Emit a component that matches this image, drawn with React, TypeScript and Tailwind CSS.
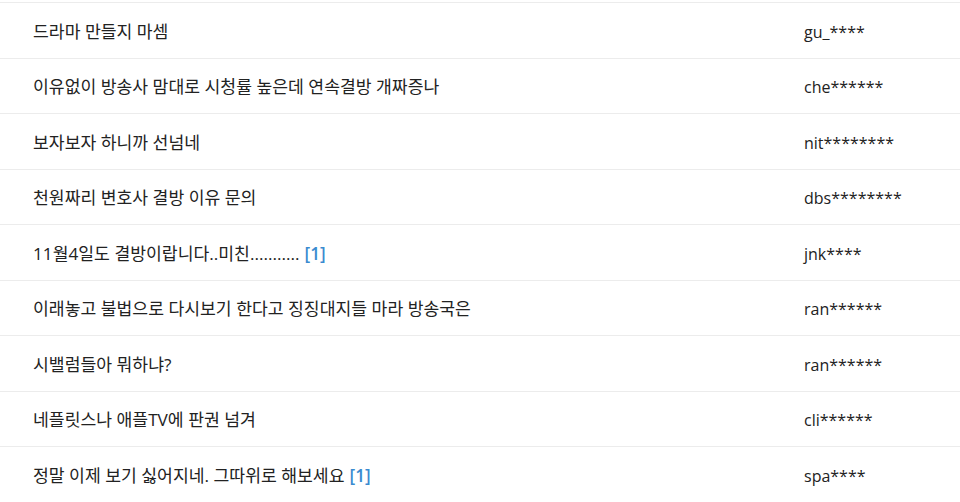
import React from "react";

const rows: { title: string; count?: number; user: string }[] = [
  { title: "드라마 만들지 마셈", user: "gu_****" },
  { title: "이유없이 방송사 맘대로 시청률 높은데 연속결방 개짜증나", user: "che******" },
  { title: "보자보자 하니까 선넘네", user: "nit********" },
  { title: "천원짜리 변호사 결방 이유 문의", user: "dbs********" },
  { title: "11월4일도 결방이랍니다..미친...........", count: 1, user: "jnk****" },
  { title: "이래놓고 불법으로 다시보기 한다고 징징대지들 마라 방송국은", user: "ran******" },
  { title: "시밸럼들아 뭐하냐?", user: "ran******" },
  { title: "네플릿스나 애플TV에 판권 넘겨", user: "cli******" },
  { title: "정말 이제 보기 싫어지네. 그따위로 해보세요", count: 1, user: "spa****" },
];

export default function App() {
  return (
    <div
      className="w-[960px] h-[502px] overflow-hidden bg-white pt-[2px]"
      style={{ fontFamily: '"Open Sans", "Noto Sans CJK KR", sans-serif' }}
    >
      {rows.map((r, i) => (
        <div
          key={i}
          className="flex items-center h-[55.5px] pt-[3px] border-t border-[#ececec] text-[#222]"
        >
          <div className="flex-1 pl-[33px] truncate text-[17.2px]">
            {r.title}
            {r.count !== undefined && (
              <span className="ml-[5px] text-[#3a8bd0] font-semibold">[{r.count}]</span>
            )}
          </div>
          <div className="w-[156px] shrink-0 text-[16px]">{r.user}</div>
        </div>
      ))}
      <div className="border-t border-[#ececec]" />
    </div>
  );
}
